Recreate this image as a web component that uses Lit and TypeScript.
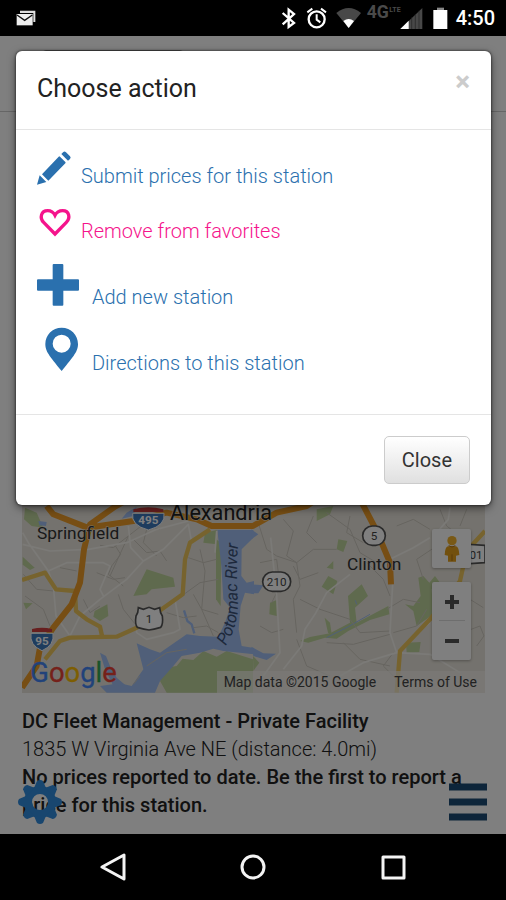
import { LitElement, html, css, svg } from "lit";
import { customElement } from "lit/decorators.js";

@customElement("status-bar")
class StatusBar extends LitElement {
  static styles = css`
    :host {
      display: flex;
      align-items: center;
      justify-content: space-between;
      height: 36px;
      padding: 0 11px 0 16px;
      background: #000;
      color: #fff;
      font: 500 20px/36px Roboto, sans-serif;
    }
    .group {
      display: flex;
      align-items: center;
    }
    .time {
      margin-left: 6px;
    }
    svg {
      display: block;
    }
  `;
  render() {
    return html`
      <svg width="20" height="16" viewBox="0 0 60 48">
        <path d="M12 2H58V36H52V9H12Z" fill="#ddd" />
        <path d="M2 12H50V46H2Z" fill="#eee" />
        <path d="M3 15L26 31L49 15" fill="none" stroke="#111" stroke-width="4" />
      </svg>
      <div class="group">
        <svg width="170" height="36" viewBox="80 -1 510 108" role="img" aria-label="Device status">
          <path d="M88 38L122 68L106 80V28L122 41L88 72" fill="none" stroke="#fff" stroke-width="7" />
          <circle cx="190" cy="57" r="24" fill="none" stroke="#fff" stroke-width="7" />
          <path d="M190 42V58L201 66M162 36L177 25M218 36L203 25" fill="none" stroke="#fff" stroke-width="6" />
          <path d="M249 38Q286 8 323 38L286 83Z" fill="#484848" />
          <path d="M270 62Q286 50 302 62L286 83Z" fill="#fff" />
          <text x="340" y="54" font-size="53" font-weight="700" fill="#4a4a4a">4G</text>
          <text x="408" y="36" font-size="21" font-weight="700" fill="#4a4a4a">LTE</text>
          <path d="M441 86L507 23V86Z" fill="#484848" />
          <path d="M441 86L466 61V86Z" fill="#fff" />
          <path d="M475 51V86M486 41V86M497 31V86" stroke="#222" stroke-width="2" />
          <path d="M540 29H582V86H540Z" fill="#fff" />
          <path d="M551 22H572V29H551Z" fill="#888" />
        </svg>
        <span class="time">4:50</span>
      </div>
    `;
  }
}

@customElement("nav-bar")
class NavBar extends LitElement {
  static styles = css`
    :host {
      display: flex;
      justify-content: center;
      height: 66px;
      background: #000;
    }
    button {
      display: flex;
      align-items: center;
      justify-content: center;
      width: 140px;
      padding: 0;
      border: 0;
      background: none;
    }
    svg {
      fill: none;
      stroke: #f4f4f4;
      stroke-width: 3;
      stroke-linejoin: round;
    }
  `;
  render() {
    return html`
      <button aria-label="Back"><svg width="28" height="28"><path d="M25 2V26L3 14Z" /></svg></button>
      <button aria-label="Home"><svg width="28" height="28"><circle cx="14" cy="14" r="11" /></svg></button>
      <button aria-label="Recent apps"><svg width="28" height="28"><rect x="4" y="4" width="21" height="21" /></svg></button>
    `;
  }
}

@customElement("station-map")
class StationMap extends LitElement {
  static styles = css`
    :host {
      display: flex;
      flex-direction: column;
      justify-content: flex-end;
      position: relative;
      overflow: hidden;
      background: #e9e5dc;
      font-family: Roboto, sans-serif;
      font-weight: 400;
    }
    .map {
      display: block;
      width: 100%;
      height: auto;
    }
    .park { fill: #bfd49c; }
    .water { fill: #a0bff2; }
    .line { fill: none; stroke-linejoin: round; }
    .lane { stroke: #cdc9c0; stroke-width: 3; }
    .road { stroke: #f6f4ef; stroke-width: 5; }
    .yellow { stroke: #eec75c; stroke-width: 13; }
    .orange { stroke: #ee9d28; stroke-width: 18; }
    .stream { stroke: #a0bff2; stroke-width: 7; }
    .place { fill: #333; font-size: 52px; stroke: #e9e5dc; stroke-width: 3; paint-order: stroke; }
    .city { font-size: 65px; fill: #222; }
    .river { fill: #3c5278; font-size: 50px; font-style: italic; }
    .shield { fill: #fff; stroke: #555; stroke-width: 5; }
    .number { fill: #444; font-size: 35px; text-anchor: middle; }
    .white { fill: #fff; font-weight: 700; }
    .interstate { fill: #3c78bd; stroke: #fff; stroke-width: 3; }
    .red { fill: #cf3f3f; }
    .brand { font-size: 82px; stroke-width: 1; }
    .g1 { fill: #4285f4; stroke: #4285f4; }
    .g2 { fill: #ea4335; stroke: #ea4335; }
    .g3 { fill: #fbbc05; stroke: #fbbc05; }
    .g4 { fill: #34a853; stroke: #34a853; }
    .legal {
      position: absolute;
      right: 0;
      bottom: 0;
      display: flex;
      gap: 18px;
      padding: 0 8px 0 7px;
      background: rgba(245, 243, 238, 0.7);
      color: #444;
      font-size: 14px;
      line-height: 22px;
    }
    .legal a {
      color: inherit;
      text-decoration: none;
    }
    .controls {
      position: absolute;
      right: 14px;
      bottom: 33px;
      display: flex;
      flex-direction: column;
      gap: 14px;
      width: 39px;
    }
    .zoom {
      display: flex;
      flex-direction: column;
      align-items: center;
      background: #fff;
      border-radius: 2px;
      box-shadow: 0 1px 3px rgba(0, 0, 0, 0.3);
    }
    button {
      display: flex;
      align-items: center;
      justify-content: center;
      width: 39px;
      height: 39px;
      padding: 0;
      border: 0;
      background: none;
    }
    .split {
      width: 26px;
      height: 1px;
      margin: -1px 0 0;
      border: 0;
      background: #ddd;
    }
  `;
  render() {
    return html`
      <svg class="map" viewBox="66 -40 1389 620" role="img" aria-label="Map of Springfield, Alexandria and Clinton">
        <g class="park">
          <path d="M440 210L520 235L525 262L455 270L440 285L400 290Z" />
          <path d="M75 25L110 40L130 85L95 80L72 60Z" />
          <path d="M68 172L104 205L90 212L68 196Z" />
          <path d="M70 310L98 312L78 330Z" />
          <path d="M284 335L322 315L325 350L300 365L280 352Z" />
          <path d="M648 120L664 130L662 320L648 300Z" />
          <path d="M615 100L650 92L650 135L610 130Z" />
          <path d="M480 545L495 505L530 500L548 478L580 482L610 455L650 472L680 455L759 480V580H500Z" />
          <path d="M759 470L778 490L760 515Z" />
          <path d="M1015 120L1042 125L1030 158L1010 150Z" />
          <path d="M980 205L1000 185L1000 210Z" />
          <path d="M965 262L985 230L1012 245L1000 285Z" />
          <path d="M1044 290L1085 255L1104 290L1065 325L1070 370L1165 320L1168 345L1110 362L1045 395L1010 418L975 415L925 430L900 425L930 413L990 402L1050 370Z" />
          <path d="M974 355L990 370L996 410L984 400Z" />
          <path d="M1215 315L1240 320L1262 290L1255 235L1270 230L1288 250L1305 230L1320 250L1295 270L1300 345L1250 380L1240 335Z" />
          <path d="M810 310L830 302L830 350L808 345Z" />
          <path d="M950 30L1000 20L990 45L950 65Z" />
          <path d="M1218 430L1262 428L1258 458L1220 460Z" />
        </g>
        <g class="water">
          <path d="M652 92H760V115L725 150L724 230L740 250L762 245V285L735 280L722 320L716 390L725 440L762 446V465L670 455L640 448L600 460L545 470L520 500L480 545L465 580H320L300 560L360 552L395 560L430 510L410 432L450 450L480 460L560 405L600 410L655 412L675 370L690 325L670 300L664 200Z" />
          <path d="M300 460L318 470L330 500L350 535L375 556L340 560L315 510Z" />
          <path d="M754 255L790 258L775 282H754Z" />
          <path d="M754 442L790 462L828 463L800 482L760 470Z" />
          <path d="M380 40L410 22L400 50L365 58Z" />
          <path d="M115 65L140 68L138 80L118 78Z" />
          <path d="M754 90L775 105L754 120Z" />
        </g>
        <path class="line stream" d="M552 333L562 365L575 375L583 402" />
        <path class="line" stroke="#a0bff2" stroke-width="3" d="M980 415L1045 382L1110 345M1066 303L1070 315" />
        <g class="line lane">
          <path d="M345 138L362 165L335 200L325 225L370 260M300 138L340 145L430 75L480 90M385 110L330 230M400 120L440 160L480 155L500 185M440 90L430 130L470 170M355 285L370 330L410 380M545 290L600 250L655 240M565 175L610 190L650 180M580 285L605 330L655 345M600 150L615 215L605 330L640 410M500 340L550 355L590 350M70 225L110 270L160 275M75 290L130 330L150 380M180 205L230 215M250 300L270 340L300 320M290 220L340 240L375 235M440 500L500 460L560 450M655 400L620 380L580 385M400 555L420 530" />
          <path d="M770 55L800 150L830 170L890 190L940 150L1010 150M850 60L880 95L860 170L890 190L900 260L880 300L890 400M980 40L1050 90L1080 160L1130 190M940 50L920 100L950 130M1050 50L1040 100L1090 130M780 190L830 180L840 260L815 310M900 300L960 330L1050 360L1080 400L1170 395M1100 190L1150 240L1170 290M955 220L900 240L880 200M980 430L1060 435L1170 405M1160 330L1210 300L1260 310M1190 80L1240 60L1290 90M1320 30L1340 80L1380 110M1400 30L1380 80M1030 430L1080 480L1170 500M890 420L920 500L990 530M780 380L815 400L850 390M1410 300L1450 325M1400 395L1440 380L1452 410L1430 440M1190 540L1150 500L1180 460M1270 240L1250 180L1310 140M1280 330L1250 380L1180 400" />
        </g>
        <g class="line road">
          <path d="M68 100L88 135L120 180L145 215L160 260L168 350L210 410M68 135L150 155L265 150L380 130L470 90L565 65M385 80L392 145L430 185L380 240L300 300L240 350L210 410M430 185L490 150L565 75L575 130M145 215L200 190L310 190L330 200L300 270L310 290M405 350L410 400L440 420L520 400L540 390L525 300M650 95L645 160" />
          <path d="M812 115L830 290L840 460L790 530M1050 225L980 280L945 345L915 390L905 440L850 510M1170 180L1240 145L1290 115M1310 100L1345 60L1350 25M1178 255L1170 400L1190 460L1090 490L1020 530M1190 460L1290 465L1380 520M1190 460L1250 400L1290 370" />
        </g>
        <g class="line yellow">
          <path d="M630 90L570 130L555 180L548 285L485 330L410 385L350 412L210 415L180 425L135 480M66 242L135 220L168 270L225 275L228 335L260 360L300 382L308 418" />
          <path d="M1455 95L1400 155L1380 245L1290 360L1200 455L1190 580" />
        </g>
        <g class="line orange">
          <path d="M66 565L110 500L120 445L160 385L215 315L240 250L252 150L270 75L345 22L420 -20M140 20L160 45L262 85L400 65L500 40L590 60L635 80H759L830 40L920 20L980 -20M1075 -10L1130 95L1170 190L1173 255" />
        </g>

        <text class="place" x="111" y="120">Springfield</text>
        <text class="place city" x="510" y="62">Alexandria</text>
        <text class="place" x="1041" y="213">Clinton</text>
        <path id="river" d="M677 440Q717 380 713 300Q707 200 718 90" fill="none" />
        <text class="river"><textPath href="#river">Potomac River</textPath></text>

        <path class="interstate" d="M398 42H492Q498 78 445 92Q392 78 398 42Z" />
        <path class="red" d="M400 30Q445 18 490 30V38H400Z" />
        <text class="number white" x="445" y="75">495</text>
        <path class="interstate" d="M93 402H159Q164 438 126 454Q88 438 93 402Z" />
        <path class="red" d="M96 389Q126 382 156 389V398H96Z" />
        <text class="number white" x="126" y="436">95</text>
        <path class="shield" d="M415 325L430 330L447 324L464 330L479 325Q480 340 487 350Q490 375 482 384Q460 390 447 392Q434 390 412 384Q404 375 408 350Q415 340 415 325Z" />
        <text class="number" x="447" y="371">1</text>
        <rect class="shield" x="1088" y="80" width="68" height="58" rx="29" />
        <text class="number" x="1122" y="121">5</text>
        <rect class="shield" x="788" y="218" width="84" height="58" rx="29" />
        <text class="number" x="830" y="259">210</text>
        <path class="shield" d="M1390 134L1455 138V190L1390 194Z" />
        <text class="number" x="1418" y="178">301</text>
        <text class="brand" x="91" y="549"><tspan class="g1">G</tspan><tspan class="g2">o</tspan><tspan class="g3">o</tspan><tspan class="g1">g</tspan><tspan class="g4">l</tspan><tspan class="g2">e</tspan></text>
      </svg>
      <div class="controls">
        <div class="zoom">
          <button aria-label="Street View">
            <svg width="18" height="28" viewBox="0 0 54 84">
              <path d="M15 34L39 34Q48 36 49 60L39 62V80H15V62L5 60Q6 36 15 34Z" fill="#e5a01c" />
              <circle cx="27" cy="17" r="14" fill="#f3b32d" />
              <path d="M17 32Q27 40 37 32M27 58V78" fill="none" stroke="#b57412" stroke-width="3" />
            </svg>
          </button>
        </div>
        <div class="zoom">
          <button aria-label="Zoom in"><svg width="16" height="16"><path d="M8 1V15M1 8H15" stroke="#555" stroke-width="4" /></svg></button>
          <hr class="split" />
          <button aria-label="Zoom out"><svg width="16" height="16"><path d="M1 8H15" stroke="#555" stroke-width="4" /></svg></button>
        </div>
      </div>
      <div class="legal"><span>Map data ©2015 Google</span><a href="#terms">Terms of Use</a></div>
    `;
  }
}

const pencil = svg`<path d="M0 101L8 73L28 93ZM15 70L65 17Q67 15 69 17L85 33Q87 35 85 37L34 89ZM73 9L79 3Q83 0 87 4L99 16Q103 20 99 24L93 29Z" fill="currentColor"/>`;
const heart = svg`<path d="M54 84L20 49C7 36 12 14 32 14C43 14 50 20 54 28C58 20 66 14 77 14C97 14 101 36 88 49Z" fill="none" stroke="currentColor" stroke-width="10"/>`;
const plus = svg`<path d="M50 6H76Q79 6 79 9V52H123Q126 52 126 55V83Q126 86 123 86H79V128Q79 131 76 131H50Q47 131 47 128V86H3Q0 86 0 83V55Q0 52 3 52H47V9Q47 6 50 6Z" fill="currentColor"/>`;
const pin = svg`<path fill-rule="evenodd" d="M74 -1C102 -1 123 21 123 48C123 70 112 82 74 129C36 82 25 70 25 48C25 21 46 -1 74 -1ZM74 20A27 27 0 1 0 74 74A27 27 0 1 0 74 20Z" fill="currentColor"/>`;

const actions = [
  { label: "Submit prices for this station", icon: pencil, kind: "small" },
  { label: "Remove from favorites", icon: heart, kind: "small pink" },
  { label: "Add new station", icon: plus, kind: "large" },
  { label: "Directions to this station", icon: pin, kind: "large" },
];

@customElement("action-dialog")
class ActionDialog extends LitElement {
  static styles = css`
    :host {
      display: block;
      border-radius: 6px;
      background: #fff;
      box-shadow: 0 3px 9px rgba(0, 0, 0, 0.5), 0 0 2px 1px rgba(0, 0, 0, 0.35);
      color: #333;
      font: 300 20px/28px Roboto, sans-serif;
    }
    header {
      display: flex;
      justify-content: space-between;
      padding: 19px 21px 21px;
      border-bottom: 1px solid #e5e5e5;
    }
    h2 {
      margin: 0;
      color: #222;
      font-size: 25px;
      font-weight: 400;
      line-height: 38px;
    }
    .dismiss {
      height: 24px;
      padding: 0;
      border: 0;
      background: none;
      color: #ccc;
      font: 700 28px/24px Roboto, sans-serif;
    }
    ul {
      margin: 0;
      padding: 6px 21px 36px;
      list-style: none;
    }
    a {
      display: flex;
      align-items: flex-end;
      color: #2a70ae;
      text-decoration: none;
    }
    .label { padding-bottom: 1px; }
    .small { height: 55px; }
    .large { height: 66px; }
    .pink { color: #f5148c; }
    .icon {
      display: block;
      margin-bottom: 6px;
      overflow: visible;
    }
    .small .icon { width: 34px; height: 34px; margin-right: 10px; }
    .large .icon { width: 42px; height: 44px; margin-right: 13px; }
    footer {
      display: flex;
      justify-content: flex-end;
      padding: 21px;
      border-top: 1px solid #e5e5e5;
    }
    .close {
      padding: 9px 17px;
      border: 1px solid #ccc;
      border-radius: 5px;
      background: linear-gradient(#fff, #e0e0e0);
      color: #333;
      font: inherit;
      font-weight: 400;
    }
  `;
  render() {
    return html`
      <header>
        <h2>Choose action</h2>
        <button class="dismiss" aria-label="Dismiss">×</button>
      </header>
      <ul>
        ${actions.map(
          (a) => html`<li><a class=${a.kind} href="#action">
            <svg class="icon" viewBox=${a.kind === "large" ? "0 0 126 132" : "0 0 102 102"} aria-hidden="true">${a.icon}</svg>
            <span class="label">${a.label}</span></a></li>`
        )}
      </ul>
      <footer><button class="close">Close</button></footer>
    `;
  }
}

@customElement("app-root")
class AppRoot extends LitElement {
  static styles = css`
    :host {
      display: flex;
      flex-direction: column;
      min-height: 100vh;
      background: #fff;
      color: #222;
      font: 300 20px/28px Roboto, sans-serif;
    }
    main {
      position: relative;
      display: flex;
      flex: 1;
      flex-direction: column;
    }
    .top {
      height: 61px;
      padding: 14px 42px 0;
      border-bottom: 1px solid #ccc;
    }
    .field {
      width: 140px;
      height: 36px;
      border: 1px solid #999;
      border-radius: 4px;
    }
    station-map {
      flex: 1;
      min-height: 200px;
      margin: 14px 21px 14px 22px;
    }
    .details {
      padding: 0 22px 15px;
    }
    p, h3 {
      margin: 0;
      font-size: 20px;
      line-height: 28px;
    }
    h3, .note { font-weight: 500; }
    .tool {
      position: absolute;
      bottom: 10px;
      padding: 0;
      border: 0;
      background: none;
    }
    .tool svg { display: block; }
    .settings { left: 18px; z-index: 2; color: #18466f; }
    .menu { right: 19px; bottom: 13px; color: #1b4a75; }
    .backdrop {
      position: absolute;
      inset: 0;
      z-index: 1;
      background: rgba(0, 0, 0, 0.5);
    }
    action-dialog {
      position: absolute;
      top: 15px;
      left: 16px;
      right: 15px;
      z-index: 3;
    }
  `;
  render() {
    return html`
      <status-bar></status-bar>
      <main>
        <div class="top"><div class="field"></div></div>
        <station-map></station-map>
        <section class="details">
          <h3>DC Fleet Management - Private Facility</h3>
          <p>1835 W Virginia Ave NE (distance: 4.0mi)</p>
          <p class="note">No prices reported to date. Be the first to report a price for this station.</p>
        </section>
        <button class="tool menu" aria-label="Menu">
          <svg width="38" height="38"><path d="M0 4H38M0 19H38M0 34H38" stroke="currentColor" stroke-width="7" /></svg>
        </button>
        <div class="backdrop"></div>
        <button class="tool settings" aria-label="Settings">
          <svg width="44" height="44" viewBox="-22 -22 44 44" fill="currentColor">
            <path fill-rule="evenodd" d="M0 -16A16 16 0 1 1 0 16A16 16 0 1 1 0 -16ZM0 -8A8 8 0 1 0 0 8A8 8 0 1 0 0 -8Z" />
            ${[0, 45, 90, 135, 180, 225, 270, 315].map(
              (deg) => svg`<path transform="rotate(${deg})" d="M-6 -14L-3 -21Q0 -23 3 -21L6 -14Z" />`
            )}
          </svg>
        </button>
        <action-dialog role="dialog" aria-label="Choose action"></action-dialog>
      </main>
      <nav-bar></nav-bar>
    `;
  }
}
